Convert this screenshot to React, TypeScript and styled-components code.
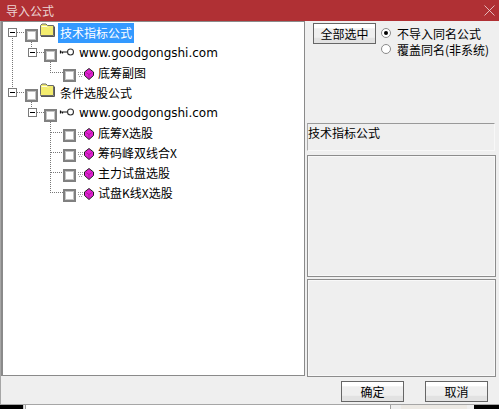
import React from "react";
import styled, { createGlobalStyle } from "styled-components";

const Global = createGlobalStyle`
  html, body { margin: 0; padding: 0; background: #fff; }
  #root { width: 499px; height: 409px; overflow: hidden; }
`;

const Win = styled.div`
  width: 499px; height: 409px; display: flex; flex-direction: column; overflow: hidden;
  font: 12px "Noto Sans CJK SC", sans-serif; color: #000;
`;
const Dialog = styled.div`
  height: 405px; flex: none; display: flex; flex-direction: column;
  background: #efefef; box-sizing: border-box; border-bottom: 1px solid #a6a6a6; border-left: 1px solid #a6a6a6;
`;
const TitleBar = styled.div`
  height: 21px; flex: none; background: #b03034; color: #ecd4d4; display: flex; align-items: center;
  justify-content: space-between; padding: 0 4px 0 6px; font-size: 12px; margin-left: -1px;
`;
const Body = styled.div`
  flex: 1; display: flex; min-height: 0;
`;
const TreePane = styled.div`
  position: relative; width: 304px; height: 355px; box-sizing: border-box; flex: none; background: #fff;
  border: 1px solid #8a8a8a; border-left-width: 2px; padding-top: 1px;
`;
const Lines = styled.svg`
  position: absolute; left: -3px; top: -22px; width: 320px; height: 240px; pointer-events: none;
`;
const Row = styled.div<{ $indent: number }>`
  position: relative; height: 20px; display: flex; align-items: center; padding-left: ${p => p.$indent}px;
`;
const Check = styled.span`
  width: 13px; height: 13px; box-sizing: border-box; border: 2px solid #808080; background: #fff;
  box-shadow: inset 0 0 0 1px #c4c4c4; flex: none; margin-top: 5px;
`;
const Label = styled.span<{ $sel?: boolean }>`
  height: 20px; line-height: 20px; padding: 0 2px; white-space: nowrap; font-size: 12px;
  background: ${p => (p.$sel ? "#3399ff" : "transparent")}; color: ${p => (p.$sel ? "#fff" : "#000")};
`;
const FolderLabel = styled(Label)`
  margin-left: 3px;
`;
const Url = styled(Label)`
  font-family: "DejaVu Sans", sans-serif; font-size: 12px; margin-top: -1px;
`;
const IconSvg = styled.svg`
  flex: none; display: block;
`;
const Side = styled.div`
  flex: 1; min-width: 0; display: flex; flex-direction: column; padding: 2px 3px 0 2px;
`;
const TopOptions = styled.div`
  height: 100px; flex: none; display: flex; align-items: flex-start; padding-left: 6px; gap: 5px;
`;
const Btn = styled.button<{ $w: number }>`
  width: ${p => p.$w}px; height: 21px; flex: none; padding: 0; box-sizing: border-box; border: 1px solid #666;
  background: linear-gradient(#fff 0, #fff 20%, #efefef 25%, #efefef 70%, #e2e2e2 75%, #e2e2e2 100%);
  font: 12px "Noto Sans CJK SC", sans-serif; color: #000; line-height: 17px;
`;
const Radios = styled.div`
  display: flex; flex-direction: column; padding-top: 2px;
`;
const RadioRow = styled.div`
  height: 16px; display: flex; align-items: center; gap: 6px; white-space: nowrap; font-size: 12px; color: #000;
`;
const RadioDot = styled.span<{ $on?: boolean }>`
  width: 10px; height: 10px; border-radius: 50%; box-sizing: border-box; flex: none; background: #fff;
  border: 1px solid #8a8a8a; display: flex; align-items: center; justify-content: center;
  &::after { content: ""; width: 4px; height: 4px; border-radius: 50%; background: ${p => (p.$on ? "#000" : "transparent")}; }
`;
const NamePanel = styled.div`
  height: 28px; flex: none; box-sizing: border-box; border-top: 1px solid #999; border-left: 1px solid #aaa;
  border-right: 1px solid #f8f8f8; border-bottom: 1px solid #f8f8f8; line-height: 17px; color: #000; margin-right: 1px;
`;
const Spacer = styled.div<{ $h: number }>`
  height: ${p => p.$h}px; flex: none;
`;
const Panel = styled.div<{ $h: number }>`
  height: ${p => p.$h}px; flex: none; box-sizing: border-box; border: 1px solid #8c8c8c; box-shadow: inset 0 0 0 1px #f8f8f8;
`;
const Footer = styled.div`
  height: 28px; flex: none; display: flex; justify-content: flex-end; gap: 21px; padding: 5px 11px 0 0; box-sizing: border-box;
`;
const Strip = styled.div`
  flex: 1; display: flex; background: #fff;
`;
const StripPart = styled.div<{ $w: number; $c: string; $grow?: boolean }>`
  flex: ${p => (p.$grow ? "1" : "none")}; width: ${p => p.$w}px; background: ${p => p.$c};
`;

const Close = () => (
  <IconSvg width="11" height="11" viewBox="0 0 11 11">
    <path d="M0.5 0.5 L10.5 10.5 M10.5 0.5 L0.5 10.5" stroke="#f0dcdc" strokeWidth="0.8" />
  </IconSvg>
);

const Folder = () => (
  <IconSvg width="16" height="14" viewBox="0 0 16 14" style={{ marginTop: -7, marginLeft: 1 }}>
    <path d="M1.5 11.5 V2.5 L3 1 H7 L8.5 2.5 H14.5 V12.5 H1.5 Z" fill="#f3ec6e" stroke="#6b6b6b" />
    <path d="M2 13.5 H15.5 V3.5" fill="none" stroke="#555" strokeWidth="1" />
    <path d="M2.5 3.5 H8 L9 4.5" fill="none" stroke="#fffde0" />
  </IconSvg>
);

const Key = () => (
  <IconSvg width="16" height="8" viewBox="0 0 16 8" style={{ margin: "-3px 2px 0 2px" }}>
    <circle cx="11.5" cy="4" r="3" fill="none" stroke="#333" strokeWidth="1.1" />
    <path d="M8 4 H1.5 M1.5 2.5 V5.5 M3.5 4 V5.5" stroke="#111" strokeWidth="1.2" fill="none" />
  </IconSvg>
);

const Gem = () => (
  <IconSvg width="16" height="12" viewBox="0 0 16 12" style={{ margin: "1px 2px 0 2px" }}>
    <path d="M0 4.5 H5 M0 6.5 H5 M1 8.5 H5" stroke="#999" strokeWidth="1" strokeDasharray="1 1" />
    <path d="M11 0.5 L15.5 4 V7.5 L11 11.5 L6.5 7.5 V4 Z" fill="#e020d0" stroke="#202020" strokeWidth="1" />
    <path d="M8 4.5 L11 6.5 L14 4.5 M11 6.5 V10.5" stroke="#8a1080" strokeWidth="0.6" fill="none" />
  </IconSvg>
);

const Box = ({ x, y }: { x: number; y: number }) => (
  <g>
    <rect x={x + 0.5} y={y + 0.5} width="8" height="8" fill="#fff" stroke="#7a7a7a" />
    <path d={`M${x + 2} ${y + 4.5} H${x + 7}`} stroke="#000" />
  </g>
);

const TreeLines = () => (
  <Lines viewBox="0 0 320 240">
    <g stroke="#777" strokeDasharray="1 1" fill="none" shapeRendering="crispEdges">
      <path d="M12.5 36 V89" />
      <path d="M17 32.5 H25" />
      <path d="M17 92.5 H25" />
      <path d="M31.5 42 V49" />
      <path d="M37 52.5 H44" />
      <path d="M50.5 62 V72.5 H63" />
      <path d="M31.5 102 V109" />
      <path d="M37 112.5 H44" />
      <path d="M50.5 122 V192.5 H63" />
      <path d="M50.5 132.5 H63 M50.5 152.5 H63 M50.5 172.5 H63" />
    </g>
    <Box x={8} y={28} />
    <Box x={28} y={48} />
    <Box x={8} y={88} />
    <Box x={28} y={108} />
  </Lines>
);

const leaves = ["底筹X选股", "筹码峰双线合X", "主力试盘选股", "试盘K线X选股"];

export default function App() {
  return (
    <Win>
      <Global />
      <Dialog>
        <TitleBar>
          <span>导入公式</span>
          <Close />
        </TitleBar>
        <Body>
          <TreePane>
            <TreeLines />
            <Row $indent={22}>
              <Check />
              <Folder />
              <FolderLabel $sel>技术指标公式</FolderLabel>
            </Row>
            <Row $indent={41}>
              <Check />
              <Key />
              <Url>www.goodgongshi.com</Url>
            </Row>
            <Row $indent={60}>
              <Check />
              <Gem />
              <Label>底筹副图</Label>
            </Row>
            <Row $indent={22}>
              <Check />
              <Folder />
              <FolderLabel>条件选股公式</FolderLabel>
            </Row>
            <Row $indent={41}>
              <Check />
              <Key />
              <Url>www.goodgongshi.com</Url>
            </Row>
            {leaves.map(t => (
              <Row $indent={60} key={t}>
                <Check />
                <Gem />
                <Label>{t}</Label>
              </Row>
            ))}
          </TreePane>
          <Side>
            <TopOptions>
              <Btn $w={63}>全部选中</Btn>
              <Radios>
                <RadioRow><RadioDot $on />不导入同名公式</RadioRow>
                <RadioRow><RadioDot />覆盖同名(非系统)</RadioRow>
              </Radios>
            </TopOptions>
            <NamePanel>技术指标公式</NamePanel>
            <Spacer $h={4} />
            <Panel $h={122} />
            <Spacer $h={2} />
            <Panel $h={98} />
          </Side>
        </Body>
        <Footer>
          <Btn $w={63}>确定</Btn>
          <Btn $w={63}>取消</Btn>
        </Footer>
      </Dialog>
      <Strip>
        <StripPart $w={23} $c="#000" />
        <StripPart $w={1} $c="#c8c8c8" />
        <StripPart $w={1} $c="#efefef" />
        <StripPart $w={1} $c="#a0a0a0" />
        <StripPart $w={0} $c="#fff" $grow />
        <StripPart $w={1} $c="#a0a0a0" />
        <StripPart $w={10} $c="#efefef" />
        <StripPart $w={66} $c="#ece9e4" />
        <StripPart $w={7} $c="#efefef" />
        <StripPart $w={25} $c="#000" />
      </Strip>
    </Win>
  );
}
